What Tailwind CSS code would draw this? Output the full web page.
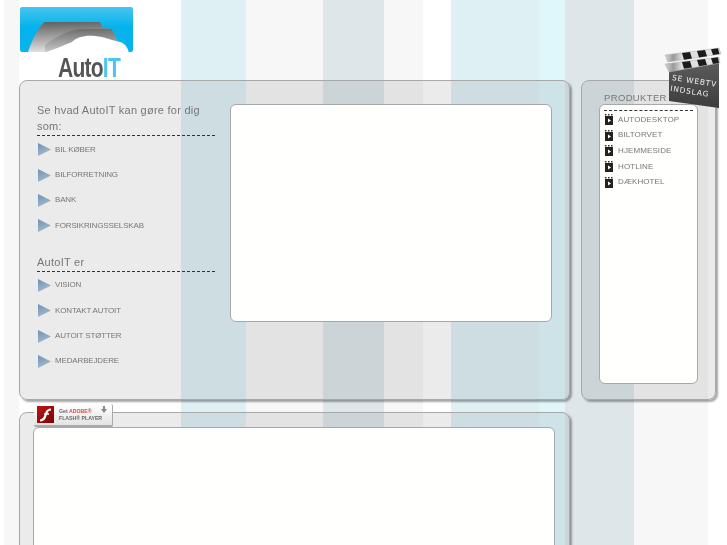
<!DOCTYPE html>
<html lang="en">

<head>
    <meta charset="UTF-8">
    <title>AutoIT</title>
    <script src="https://cdn.jsdelivr.net/npm/@tailwindcss/browser@4"></script>
</head>

<body class="bg-white font-['Liberation_Sans',sans-serif] text-[#777]">
    <div class="relative h-[545px] overflow-hidden will-change-transform">
        <!-- baggrundsstriber -->
        <div class="absolute inset-0 flex">
            <div class="w-[4px] bg-white"></div>
            <div class="w-[15px] bg-[#f7f7f8]"></div>
            <div class="w-[162px] bg-white"></div>
            <div class="w-[65px] bg-[#dff0f5]"></div>
            <div class="w-[77px] bg-[#f7f7f8]"></div>
            <div class="w-[61px] bg-[#dee6ea]"></div>
            <div class="w-[39px] bg-[#f7f7f8]"></div>
            <div class="w-[28px] bg-white"></div>
            <div class="w-[88px] bg-[#dff0f5]"></div>
            <div class="w-[26px] bg-[#dff7fb]"></div>
            <div class="w-[69px] bg-[#dee6ea]"></div>
            <div class="w-[74px] bg-[#f7f7f8]"></div>
            <div class="w-[19px] bg-white"></div>
        </div>

        <div class="relative pl-[19px]">
            <!-- logo -->
            <div class="h-[80px] w-[115px] relative">
                <svg class="absolute left-0 top-[7px]" width="115" height="46" viewBox="0 0 115 46">
                    <defs>
                        <linearGradient id="sky" x1="0" y1="0" x2="0" y2="1">
                            <stop offset="0" stop-color="#45c6f0" />
                            <stop offset="0.45" stop-color="#04b2ec" />
                            <stop offset="1" stop-color="#0ab4ec" />
                        </linearGradient>
                        <linearGradient id="car" x1="0" y1="0" x2="0.1" y2="1">
                            <stop offset="0" stop-color="#5e5e5e" />
                            <stop offset="1" stop-color="#e0e0e0" />
                        </linearGradient>
                        <linearGradient id="car2" x1="0" y1="0" x2="0" y2="1">
                            <stop offset="0" stop-color="#6e6e6e" />
                            <stop offset="1" stop-color="#c8c8c8" />
                        </linearGradient>
                        <linearGradient id="arrow" x1="0" y1="0" x2="0.4" y2="1">
                            <stop offset="0" stop-color="#6d92b4" />
                            <stop offset="1" stop-color="#a3b9cd" />
                        </linearGradient>
                        <linearGradient id="board" x1="0" y1="0" x2="0" y2="1">
                            <stop offset="0" stop-color="#5c5c5c" />
                            <stop offset="1" stop-color="#3c3c3c" />
                        </linearGradient>
                        <linearGradient id="stick" x1="0" y1="0" x2="1" y2="0">
                            <stop offset="0" stop-color="#d8d8d8" />
                            <stop offset="0.15" stop-color="#999999" />
                            <stop offset="0.3" stop-color="#dddddd" />
                            <stop offset="1" stop-color="#e4e4e4" />
                        </linearGradient>
                    </defs>
                    <rect x="1" y="0" width="113" height="45" rx="2" fill="url(#sky)" />
                    <path d="M9 45C14 30 21 18 26 15L81 15L83 20L92 22C96 26 98 33 100 45Z" fill="url(#car)" />
                    <path d="M26 38C36 30 48 24 60 22L92 22C96 26 98 33 100 45L26 45Z" fill="url(#car2)" />
                    <path d="M24 46C34 43 46 38 53 35C58 30 66 28 76 29C86 30 92 33 97 34C103 35 108 37 110 46Z" fill="#fff" />
                </svg>
                <div class="absolute left-[39px] top-[55px] text-[27px] leading-[26px] font-bold tracking-[-1px] text-[#555] whitespace-nowrap origin-left scale-x-[.78]">Auto<span class="text-[#4cc6f0]">IT</span></div>
            </div>

            <div class="flex gap-[11px] items-start">
                <!-- hovedpanel -->
                <div class="w-[551px] h-[320px] rounded-[8px] border border-[#a8a8a8] bg-black/[.08] shadow-[2px_2px_2px_rgba(0,0,0,0.35)] flex pl-[17px] pt-[21px]">
                    <div class="w-[178px] shrink-0">
                        <h2 class="text-[11px] leading-[16px] tracking-[0.25px] text-[#777] border-b border-dashed border-[#333] pb-[1px] font-normal">Se hvad AutoIT kan gøre for dig som:</h2>
                        <ul class="mt-[1px]">
                            <li class="h-[25.4px] pl-[1px] flex items-center gap-[4px] text-[8px] tracking-[-0.15px] text-[#777]"><svg width="13" height="13" viewBox="0 0 13 13"><path d="M0 0L13 6.5L0 13Z" fill="url(#arrow)" /></svg>BIL KØBER</li>
                            <li class="h-[25.4px] pl-[1px] flex items-center gap-[4px] text-[8px] tracking-[-0.15px] text-[#777]"><svg width="13" height="13" viewBox="0 0 13 13"><path d="M0 0L13 6.5L0 13Z" fill="url(#arrow)" /></svg>BILFORRETNING</li>
                            <li class="h-[25.4px] pl-[1px] flex items-center gap-[4px] text-[8px] tracking-[-0.15px] text-[#777]"><svg width="13" height="13" viewBox="0 0 13 13"><path d="M0 0L13 6.5L0 13Z" fill="url(#arrow)" /></svg>BANK</li>
                            <li class="h-[25.4px] pl-[1px] flex items-center gap-[4px] text-[8px] tracking-[-0.15px] text-[#777]"><svg width="13" height="13" viewBox="0 0 13 13"><path d="M0 0L13 6.5L0 13Z" fill="url(#arrow)" /></svg>FORSIKRINGSSELSKAB</li>
                        </ul>
                        <h2 class="mt-[15px] text-[11px] leading-[16px] tracking-[0.25px] text-[#777] border-b border-dashed border-[#333] pb-[1px] font-normal">AutoIT er</h2>
                        <ul class="mt-[1px]">
                            <li class="h-[25.4px] pl-[1px] flex items-center gap-[4px] text-[8px] tracking-[-0.15px] text-[#777]"><svg width="13" height="13" viewBox="0 0 13 13"><path d="M0 0L13 6.5L0 13Z" fill="url(#arrow)" /></svg>VISION</li>
                            <li class="h-[25.4px] pl-[1px] flex items-center gap-[4px] text-[8px] tracking-[-0.15px] text-[#777]"><svg width="13" height="13" viewBox="0 0 13 13"><path d="M0 0L13 6.5L0 13Z" fill="url(#arrow)" /></svg>KONTAKT AUTOIT</li>
                            <li class="h-[25.4px] pl-[1px] flex items-center gap-[4px] text-[8px] tracking-[-0.15px] text-[#777]"><svg width="13" height="13" viewBox="0 0 13 13"><path d="M0 0L13 6.5L0 13Z" fill="url(#arrow)" /></svg>AUTOIT STØTTER</li>
                            <li class="h-[25.4px] pl-[1px] flex items-center gap-[4px] text-[8px] tracking-[-0.15px] text-[#777]"><svg width="13" height="13" viewBox="0 0 13 13"><path d="M0 0L13 6.5L0 13Z" fill="url(#arrow)" /></svg>MEDARBEJDERE</li>
                        </ul>
                    </div>
                    <div class="ml-[15px] mt-[2px] w-[322px] h-[218px] bg-[#fffffd] rounded-[6px] border border-[#a8a8a8]"></div>
                </div>

                <!-- produkter -->
                <div class="w-[135px] h-[320px] rounded-[8px] border border-[#a8a8a8] bg-black/[.08] shadow-[2px_2px_2px_rgba(0,0,0,0.35)] pl-[17px] pt-[11px]">
                    <h3 class="pl-[5px] text-[9.5px] leading-[11px] tracking-[0.35px] text-[#777] font-normal">PRODUKTER</h3>
                    <div class="mt-[1px] w-[99px] h-[280px] bg-[#fffffd] rounded-[6px] border border-[#a8a8a8] px-[4px] pt-[5px]">
                        <ul class="border-t border-dashed border-[#333] pt-[1px]">
                            <li class="h-[15.6px] pl-[1px] flex items-center gap-[5px] text-[8px] tracking-[0.1px] text-[#777]"><svg width="8" height="11" viewBox="0 0 8 11"><path d="M0 2L8 2L8 11L0 11Z" fill="#222" /><path d="M0 0h1.5v1.5h-1.500zM3 0h1.500v1.500h-1.500zM6 0h1.500v1.500h-1.500z" fill="#333" /><path d="M3 4.500L6 6.500L3 8.500Z" fill="#fff" /></svg>AUTODESKTOP</li>
                            <li class="h-[15.6px] pl-[1px] flex items-center gap-[5px] text-[8px] tracking-[0.1px] text-[#777]"><svg width="8" height="11" viewBox="0 0 8 11"><path d="M0 2L8 2L8 11L0 11Z" fill="#222" /><path d="M0 0h1.5v1.5h-1.500zM3 0h1.500v1.500h-1.500zM6 0h1.500v1.500h-1.500z" fill="#333" /><path d="M3 4.500L6 6.500L3 8.500Z" fill="#fff" /></svg>BILTORVET</li>
                            <li class="h-[15.6px] pl-[1px] flex items-center gap-[5px] text-[8px] tracking-[0.1px] text-[#777]"><svg width="8" height="11" viewBox="0 0 8 11"><path d="M0 2L8 2L8 11L0 11Z" fill="#222" /><path d="M0 0h1.5v1.5h-1.500zM3 0h1.500v1.500h-1.500zM6 0h1.500v1.500h-1.500z" fill="#333" /><path d="M3 4.500L6 6.500L3 8.500Z" fill="#fff" /></svg>HJEMMESIDE</li>
                            <li class="h-[15.6px] pl-[1px] flex items-center gap-[5px] text-[8px] tracking-[0.1px] text-[#777]"><svg width="8" height="11" viewBox="0 0 8 11"><path d="M0 2L8 2L8 11L0 11Z" fill="#222" /><path d="M0 0h1.5v1.5h-1.500zM3 0h1.500v1.500h-1.500zM6 0h1.500v1.500h-1.500z" fill="#333" /><path d="M3 4.500L6 6.500L3 8.500Z" fill="#fff" /></svg>HOTLINE</li>
                            <li class="h-[15.6px] pl-[1px] flex items-center gap-[5px] text-[8px] tracking-[0.1px] text-[#777]"><svg width="8" height="11" viewBox="0 0 8 11"><path d="M0 2L8 2L8 11L0 11Z" fill="#222" /><path d="M0 0h1.5v1.5h-1.500zM3 0h1.500v1.500h-1.500zM6 0h1.500v1.500h-1.500z" fill="#333" /><path d="M3 4.500L6 6.500L3 8.500Z" fill="#fff" /></svg>DÆKHOTEL</li>
                        </ul>
                    </div>
                </div>
            </div>

            <!-- nederste panel -->
            <div class="mt-[12px] w-[551px] h-[300px] rounded-[8px] border border-[#a8a8a8] bg-black/[.08] shadow-[2px_2px_2px_rgba(0,0,0,0.35)] pl-[13px] pt-[14px]">
                <div class="w-[522px] h-[280px] bg-[#fffffd] rounded-[6px] border border-[#a8a8a8]"></div>
            </div>
        </div>

        <!-- clapperboard -->
        <div class="absolute left-[661px] top-[46px] w-[66px] h-[66px]">
            <svg class="absolute inset-0" width="66" height="66" viewBox="0 0 66 66">
                <path d="M8 24L58 16L58 62L8 55Z" fill="url(#board)" />
                <path d="M4 9L58 2L60 8L7 16Z" fill="url(#stick)" stroke="#aaa" stroke-width="0.5" />
                <path d="M21 7L29 6L31 12.500L23 13.700ZM36 5L44 4L46 10.200L38 11.500ZM50 3.200L57 2.300L58.500 8L52 9Z" fill="#1c1c1c" />
                <path d="M4 18L58 11L59 17L8 26Z" fill="url(#stick)" stroke="#aaa" stroke-width="0.5" />
                <path d="M21 16L29 15L31 21.500L23 22.800ZM36 14L44 13L46 19L38 20.300ZM50 12.200L57 11.300L58 17L52 18Z" fill="#1c1c1c" />
            </svg>
            <div class="absolute left-[12px] top-[26px] rotate-[9deg] origin-top-left text-[7.5px] leading-[11px] tracking-[0.8px] text-[#eee] whitespace-nowrap font-['DejaVu_Sans',sans-serif]">SE WEBTV<br>INDSLAG</div>
        </div>

        <!-- flash badge -->
        <div class="absolute left-[34px] top-[404px] w-[79px] h-[23px] flex items-center bg-gradient-to-b from-[#fff] to-[#e4e4e4] border-b-2 border-r border-[#aaa] rounded-[2px]">
            <div class="ml-[3px] w-[17px] h-[17px] bg-gradient-to-br from-[#c01414] to-[#7a0505] flex items-center justify-center">
                <svg width="13" height="15" viewBox="0 0 13 15"><path d="M1 13.500C6 13.500 6 9 7.500 5.500C8.500 3 10 2.500 12 2.500" fill="none" stroke="#fff" stroke-width="2.200" /><path d="M5 7H10" stroke="#fff" stroke-width="1.500" /></svg>
            </div>
            <div class="ml-[5px] text-[5.2px] leading-[7px] font-bold text-[#666] whitespace-nowrap">Get <span class="text-[#e84040]">ADOBE®</span><br>FLASH® PLAYER</div>
            <svg class="absolute right-[5px] top-[2px]" width="6" height="7" viewBox="0 0 6 7"><path d="M2 0H4V3H6L3 7L0 3H2Z" fill="#888" /></svg>
        </div>
    </div>
</body>

</html>
